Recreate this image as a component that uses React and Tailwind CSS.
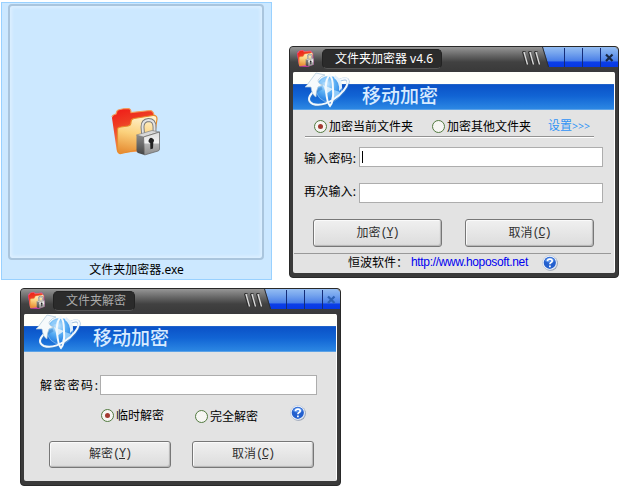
import { clsx } from 'clsx';

function FolderLock({ className, fringe }) {
  return (
    <svg className={className} viewBox="0 0 50 50">
      <defs>
        <linearGradient id="folderBack" x1="0" y1="0" x2="0.3" y2="1">
          <stop offset="0" stopColor="#f01818" />
          <stop offset="0.35" stopColor="#ee3a22" />
          <stop offset="1" stopColor="#f69a58" />
        </linearGradient>
        <linearGradient id="folderFront" x1="0.6" y1="0" x2="0.4" y2="1">
          <stop offset="0" stopColor="#fff3cf" />
          <stop offset="0.5" stopColor="#fbd17c" />
          <stop offset="1" stopColor="#e78f35" />
        </linearGradient>
        <linearGradient id="lockFace" x1="0" y1="0" x2="0" y2="1">
          <stop offset="0" stopColor="#dcdcdc" />
          <stop offset="0.48" stopColor="#f4f4f4" />
          <stop offset="0.52" stopColor="#b4b4b4" />
          <stop offset="1" stopColor="#8d8d8d" />
        </linearGradient>
        <linearGradient id="lockSide" x1="0" y1="0" x2="0" y2="1">
          <stop offset="0" stopColor="#8a8a8a" />
          <stop offset="1" stopColor="#444" />
        </linearGradient>
      </defs>
      {fringe && (
        <path d="M1 10 L6 4 L17 1 L21 5 L40 3 L46 11 L48 42 L33 48 L8 47 Z" fill="#d83cb4" stroke="#d83cb4" strokeWidth="3" />
      )}
      <path d="M1 11 Q1 8 5 7 L6 4 Q7 2 17 1.500 Q20 1.500 20 5.500 L39 3.500 Q42 3.500 43 8 L45 12 L37 44 L8 46 Q6 46 5.500 42 Z" fill="url(#folderBack)" />
      <path d="M1 10 Q1 8 5 7 L6 4 Q7 2 17 1.500 Q20 1.500 20 5.500 L39 3.500 Q42 3.500 43 8" fill="none" stroke="#f39a58" strokeWidth="1.200" />
      <path d="M6.500 23 Q6.500 20 10 20 L17 19 Q20 18.500 20 15 Q20 12 23 11.500 L42 8.500 Q46 8 46 12 L42 38 Q41 40 38 40.500 L10 46.500 Q7 47 6.500 43 Z" fill="url(#folderFront)" stroke="#e78c2c" strokeWidth="1.200" />
      <path d="M32 27 L31.500 20 Q31.500 13.500 37.500 13 Q43.500 13 43.500 20 L43.500 26" fill="none" stroke="#777" strokeWidth="3.800" />
      <path d="M32 27 L31.500 20 Q31.500 13.500 37.500 13 Q43.500 13 43.500 20 L43.500 26" fill="none" stroke="#e2e2e2" strokeWidth="2" />
      <path d="M25.500 28 L33 29 L33.500 48 L27 46 Q25.500 45.500 25.500 43 Z" fill="url(#lockSide)" />
      <path d="M25.500 28 L41 23.500 L48.500 25 L32.500 30 Z" fill="#d8d8d8" stroke="#777" strokeWidth="0.600" />
      <path d="M32.500 30 L48.500 25 L48.500 42 Q48.500 43.500 47 44 L33.500 48 Z" fill="url(#lockFace)" stroke="#6b6b6b" strokeWidth="0.800" />
      <path d="M39.200 36 A2.600 2.600 0 1 1 42.300 35.200 L42 41.500 L39.400 42.300 Z" fill="#222" />
    </svg>
  );
}

function Globe() {
  return (
    <svg className="ml-[9px] h-[38px] w-[50px] shrink-0" viewBox="0 0 50 38">
      <defs>
        <radialGradient id="globeBall" cx="0.4" cy="0.3" r="0.75">
          <stop offset="0" stopColor="#cdeaff" />
          <stop offset="0.45" stopColor="#5aaff4" />
          <stop offset="1" stopColor="#1670dc" />
        </radialGradient>
      </defs>
      <circle cx="27" cy="17" r="13" fill="url(#globeBall)" stroke="#b7dcf8" strokeWidth="0.500" />
      <path d="M17 11 Q21 5 27 5 L23 10 Z M32 18 L38 20 L33 27 L29 27 Z" fill="#8fcbfa" />
      {/* orbit ring */}
      <path d="M38 8 Q47 5 46 11 Q44 20 32 28 Q20 36 11 33 Q3 29 12 21 Q16 18 20 16" fill="none" stroke="#3b7fc6" strokeWidth="3" opacity="0.5" />
      <path d="M37 8 Q46 4 46 10 Q44 19 32 27 Q20 35 11 32 Q3 28 11 20" fill="none" stroke="#f3f8fc" strokeWidth="2" />
      <path d="M29 2 Q23 6 24 18 Q25 31 28 34 Q32 29 31 17 Q31 5 27 2" fill="none" stroke="#f5fafd" strokeWidth="2" />
      {/* arrow heads */}
      <path d="M14 1 L5 13 L3 15 L9 15 Q10 23 14 25 Q14 19 16 15 L21 13 Q16 12 16 8 Q19 4 23 3 Z" fill="#f6fafc" stroke="#aac6da" strokeWidth="0.700" />
      <path d="M21 13 L31 17 L24 22 Z" fill="#eff7fd" opacity="0.8" />
      <path d="M33 3 Q41 8 40 16 L37 19 Q38 10 32 6 Z" fill="#e4f1fb" />
    </svg>
  );
}

function HelpIcon() {
  return (
    <svg className="h-4 w-4 shrink-0" viewBox="0 0 16 16">
      <circle cx="8.500" cy="8.500" r="7.300" fill="#8f98a8" />
      <circle cx="7.800" cy="7.800" r="7.300" fill="#f2f6fc" stroke="#b3c1d8" strokeWidth="0.600" />
      <circle cx="7.800" cy="7.800" r="6.100" fill="#2460ce" />
      <path d="M3 6 Q4 2.500 8 2.500 Q11.500 2.500 12.600 6 Q8 9 3 6" fill="#5a92ea" />
      <path d="M5.500 6.100 Q5.600 4 7.900 4 Q10.200 4.100 10.200 6 Q10.100 7.200 8.800 7.800 Q7.900 8.300 7.900 9.300 M7.900 10.500 V12.200" fill="none" stroke="#fff" strokeWidth="1.700" />
    </svg>
  );
}

function TitleButtons({ muted }) {
  return (
    <svg className="h-[22px] w-[98px] shrink-0" viewBox="0 0 98 22">
      <defs>
        <linearGradient id="blueTab" x1="0" y1="0" x2="0" y2="1">
          <stop offset="0" stopColor="#94bdf3" />
          <stop offset="0.3" stopColor="#76a5ee" />
          <stop offset="0.68" stopColor="#4b80e8" />
          <stop offset="0.76" stopColor="#0b3ee8" />
          <stop offset="1" stopColor="#0638e2" />
        </linearGradient>
      </defs>
      {[4, 10, 16].map(x => (
        <g key={x} fill="none">
          <path d={`M${x - 1.5} 5 L${x + 2} 17.5`} stroke="#2c2c2c" strokeWidth="1" />
          <path d={`M${x - 1.5} 4.500 H${x + 1.5}`} stroke="#333" strokeWidth="1" />
          <path d={`M${x} 5 L${x + 3.5} 17.5`} stroke="#e0e0e0" strokeWidth="1.200" />
        </g>
      ))}
      <path d="M23 0 H95 L98 3 V20 H29 Z" fill="url(#blueTab)" />
      <path d="M22.500 0 L28.500 20" stroke="#272e3c" strokeWidth="1" />
      {[44.5, 62.5, 80.5].map(x => (
        <path key={x} d={`M${x} 1 V20`} stroke="#142c78" strokeWidth="1" />
      ))}
      <path d="M86 7.500 L92.500 14 M92.500 7.500 L86 14" stroke={muted ? '#2e62b4' : '#182843'} strokeWidth="2.200" />
    </svg>
  );
}

function Window({ title, muted, className, children }) {
  return (
    <div className={clsx('flex flex-col rounded-[4px] border border-[#292929] bg-[#3a3a3a]', className)}>
      <div className="flex h-[25px] shrink-0 items-start rounded-t-[3px] bg-[linear-gradient(#969696_0px,#686868_8px,#414141_15px,#393939_25px)]">
        <FolderLock fringe className="ml-[7px] mt-[3px] h-[17px] w-[17px] shrink-0" />
        <div
          className={clsx(
            'mt-[2px] ml-[8px] flex h-5 items-center whitespace-nowrap rounded-[5px] border border-[#222] border-b-[#555] bg-[#2b2b2b] pl-[12px] text-[12px]',
            muted ? 'w-[82px] text-[#aaa]' : 'w-[120px] text-white'
          )}
        >
          {title}
        </div>
        <div className="grow" />
        <TitleButtons muted={muted} />
      </div>
      <div className="mx-[3px] mb-[4px] flex min-h-0 grow flex-col rounded-[2px] border-r border-white bg-[#e3e3e3]">
        <div className="flex h-[38px] shrink-0 rounded-tl-[2px] bg-[linear-gradient(#fffffa_12px,#3472c8_12px,#0b52c7_13px,#1164d4_24px,#2c87e3_37px,#8dbde9_38px)]">
          <Globe />
          <span className="ml-[10px] mt-[12px] whitespace-nowrap text-[19px] font-medium leading-[24px] text-[#d8ebff]">移动加密</span>
        </div>
        {children}
      </div>
    </div>
  );
}

function Radio({ checked, label, className }) {
  return (
    <div className={clsx('flex h-[14px] items-center whitespace-nowrap', className)}>
      <span className="flex h-[13px] w-[13px] shrink-0 items-center justify-center rounded-full border border-[#527a40] bg-[#f6f6f3]">
        {checked && <span className="h-[5px] w-[5px] rounded-full bg-[#a33a32]" />}
      </span>
      <span className="ml-[2px] pt-px">{label}</span>
    </div>
  );
}

function Button({ label, hotkey, className }) {
  return (
    <button
      className={clsx(
        'flex items-center justify-center rounded-[3px] border border-[#777] bg-linear-to-b from-[#f0f0f0] to-[#dcdcdc] pb-px text-[#303030] shadow-[inset_1px_1px_0_#fafafa,inset_-1px_-1px_1px_#b4b4b4]',
        className
      )}
    >
      {label}
      <span className="font-['Liberation_Mono'] text-[12px] tracking-[-1.2px]">(<u>{hotkey}</u>)</span>
    </button>
  );
}

function Field({ label, caret, className, inputClass, labelClass }) {
  return (
    <div className={clsx('flex h-5 items-center', className)}>
      <span className={clsx('shrink-0 whitespace-nowrap', labelClass)}>{label}</span>
      <div className={clsx('flex h-5 items-center border border-[#adadad] bg-white pl-[2px]', inputClass)}>
        {caret && <span className="mb-px h-3 w-px bg-black" />}
      </div>
    </div>
  );
}

function EncryptWindow() {
  return (
    <Window title="文件夹加密器 v4.6" className="ml-[17px] mt-[44px] h-[232px] w-[330px]">
      <div className="ml-[12px] flex h-[27px] w-[289px] items-center border-b border-[#929292] pt-[7px] shadow-[0_1px_0_#fff]">
        <Radio checked label="加密当前文件夹" className="ml-[9px] w-[118px]" />
        <Radio label="加密其他文件夹" className="w-[116px]" />
        <span className="mb-px whitespace-nowrap text-[#3193f5]">设置<span className="text-[10.5px]">&gt;&gt;&gt;</span></span>
      </div>
      <Field label="输入密码:" caret className="ml-[11px] mt-[10px]" labelClass="w-[55px] pt-[3px] tracking-[0.2px]" inputClass="w-[244px]" />
      <Field label="再次输入:" className="ml-[11px] mt-[16px]" labelClass="w-[55px] tracking-[0.2px] pb-[3px]" inputClass="w-[244px]" />
      <div className="ml-[20px] mt-[16px] flex gap-[23px]">
        <Button label="加密" hotkey="Y" className="h-[28px] w-[129px]" />
        <Button label="取消" hotkey="C" className="h-[28px] w-[129px]" />
      </div>
      <div className="ml-px mt-[6px] flex h-[18px] w-[317px] items-center border-t border-[#999] pl-[54px]">
        <span className="w-[63px] whitespace-nowrap">恒波软件：</span>
        <a className="w-[131px] whitespace-nowrap pb-px font-['Liberation_Sans'] text-[12px] tracking-[-0.34px] text-[#0000f0]">http://www.hoposoft.net</a>
        <HelpIcon />
      </div>
    </Window>
  );
}

function DecryptWindow() {
  return (
    <Window title="文件夹解密" muted className="ml-[20px] mt-[8px] h-[198px] w-[321px]">
      <Field label="解密密码:" className="ml-[16px] mt-[23px]" labelClass="w-[60px] pt-px tracking-[1.7px]" inputClass="w-[217px]" />
      <div className="ml-[77px] mt-[13px] flex">
        <Radio checked label="临时解密" className="w-[94px]" />
        <Radio label="完全解密" className="mt-px w-[95px]" />
        <div className="-mt-[3px]">
          <HelpIcon />
        </div>
      </div>
      <div className="ml-[25px] mt-[18px] flex gap-[21px]">
        <Button label="解密" hotkey="Y" className="h-[27px] w-[122px]" />
        <Button label="取消" hotkey="C" className="h-[27px] w-[122px]" />
      </div>
    </Window>
  );
}

function App() {
  return (
    <div className="h-[490px] w-[630px] overflow-hidden bg-white font-['Noto_Sans','Noto_Sans_CJK_SC',sans-serif] text-[12px] leading-[16px] text-black">
      <div className="flex items-start pl-px pt-[2px]">
        {/* Selected file on the desktop */}
        <div className="flex h-[278px] w-[271px] shrink-0 flex-col items-center border border-[#99d1ff] bg-[#cce8ff]">
          <div className="mt-px mr-px flex h-[256px] w-[256px] shrink-0 items-center justify-center rounded-[4px] border-2 border-[#aac5dd] shadow-[inset_0_0_3px_2px_#dcefff]">
            <FolderLock className="h-[50px] w-[50px]" />
          </div>
          <span className="mt-[2px] whitespace-nowrap">文件夹加密器.exe</span>
        </div>
        <EncryptWindow />
      </div>
      <DecryptWindow />
    </div>
  );
}

export default App;
